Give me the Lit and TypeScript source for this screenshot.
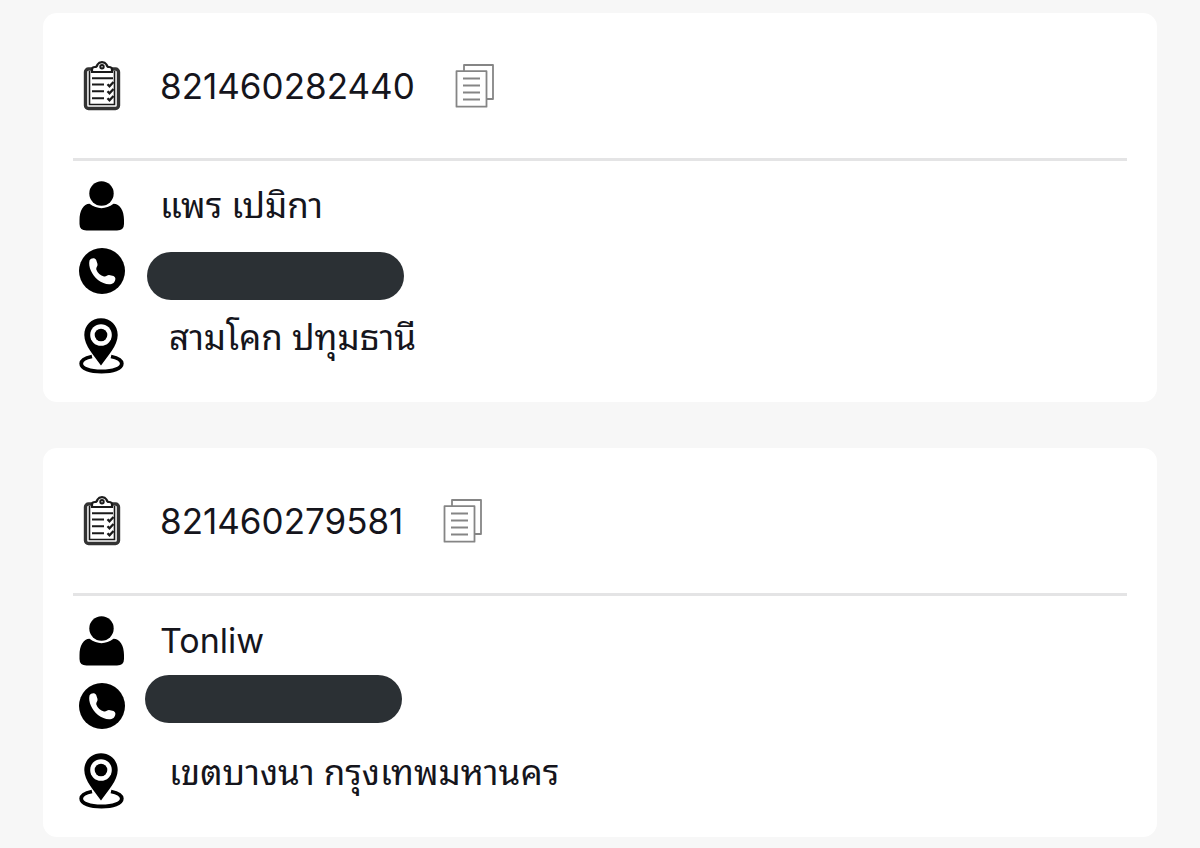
import { LitElement, html, css, svg } from "lit";
import { customElement, property } from "lit/decorators.js";
import { classMap } from "lit/directives/class-map.js";

interface Parcel {
  tracking: string;
  name: string;
  nameLang: string;
  address: string;
  raised: boolean;
}

const parcels: Parcel[] = [
  { tracking: "821460282440", name: "แพร เปมิกา", nameLang: "th", address: "สามโคก ปทุมธานี", raised: false },
  { tracking: "821460279581", name: "Tonliw", nameLang: "en", address: "เขตบางนา กรุงเทพมหานคร", raised: true },
];

const clipboardIcon = svg`
  <svg width="38" height="50" viewBox="0 0 38 50" fill="none" stroke="#1a1a1a" aria-hidden="true">
    <rect x="2.500" y="8" width="33" height="39.500" rx="3" stroke="#333" stroke-width="3.400"/>
    <path d="M6.500 10V43.500H31.500V10" stroke-width="1.600"/>
    <path d="M9 11V8.500Q9 6 12 6Q14 6 14.500 3.500Q16 1.200 19 1.200Q22 1.200 23.500 3.500Q24 6 26 6Q29 6 29 8.500V11Z" fill="#fff" stroke-width="2.200"/>
    <circle cx="19" cy="5.800" r="1.700" stroke-width="2"/>
    <path d="M9 17.200H30M9 23.500H21M9 30.200H21M9 37.200H21" stroke-width="2"/>
    <path d="M24.500 23.200L26.500 25.300L30.500 21M24.500 30.200L26.500 32.300L30.500 28M24.500 37.200L26.500 39.300L30.500 35" stroke-width="2.300"/>
  </svg>`;

const copyIcon = svg`
  <svg width="40" height="44" viewBox="0 0 40 44" fill="none" stroke="#858585" stroke-width="1.800" stroke-linejoin="round" aria-hidden="true">
    <path d="M9 7V1H38V35H32"/>
    <rect x="1.500" y="7.200" width="30" height="35.500"/>
    <path d="M8 14.500H25M8 21.500H25M8 28.500H25M8 35.500H25" stroke-width="2"/>
  </svg>`;

const personIcon = svg`
  <svg width="46" height="50" viewBox="0 0 46 50" aria-hidden="true">
    <circle cx="22.500" cy="12.500" r="12.200"/>
    <path d="M10.500 22.800Q22.500 31.500 34.500 22.800C41 22.800 45 30 45 39V43Q45 49.500 38 49.500H7.500Q0.500 49.500 0.500 43V39C0.500 30 4.500 22.800 10.500 22.800Z"/>
  </svg>`;

const phoneIcon = svg`
  <svg width="46" height="46" viewBox="0 0 46 46" aria-hidden="true">
    <circle cx="23" cy="23" r="23"/>
    <path fill="#fff" d="M10.500 12.500C12 9.600 16 9.300 17.200 12L18.500 16C19 18.200 16.800 19.500 17.300 21.500C18.500 25 21.500 27.500 25 28.500C27.200 29 28 27 30 27L34.500 28C37.500 29.500 36.500 33 34.500 35C31 37.500 24 36 19 32C13 27 9 19 10.500 12.500Z"/>
  </svg>`;

const pinIcon = svg`
  <svg width="46" height="56" viewBox="0 0 46 56" aria-hidden="true">
    <path d="M13 38.500C6 40 2.200 42.500 2.200 45.500C2.200 50.500 11 53.500 22.500 53.500C34 53.500 42.800 50.500 42.800 45.500C42.800 42.500 39 40 32 38.500" fill="none" stroke="#000" stroke-width="3.800"/>
    <path d="M22 0.300C12.500 0.300 5.300 7.500 5.300 17C5.300 28 15.500 38 22 47.500C28.500 38 38.700 28 38.700 17C38.700 7.500 31.500 0.300 22 0.300Z"/>
    <circle cx="22" cy="17" r="10.800" fill="#fff"/>
    <circle cx="22" cy="17" r="6.300"/>
  </svg>`;

@customElement("parcel-card")
export class ParcelCard extends LitElement {
  @property({ attribute: false }) parcel!: Parcel;

  static styles = css`
    :host {
      display: block;
      padding: 0 30px 28px;
      border-radius: 14px;
      background: #fff;
    }
    svg {
      display: block;
    }
    .header,
    .row {
      display: flex;
    }
    .header {
      align-items: center;
      height: 145px;
      border-bottom: 3px solid #e4e4e5;
    }
    .icon {
      display: flex;
      flex: none;
      justify-content: center;
      width: 58px;
      margin-right: 29px;
    }
    .tracking {
      font-size: 35px;
      line-height: 44px;
      margin-right: 40px;
    }
    .copy {
      padding: 0;
      border: 0;
      background: none;
      cursor: pointer;
    }
    .details {
      display: flex;
      flex-direction: column;
      gap: 16px;
      padding-top: 20px;
    }
    .row {
      align-items: center;
    }
    .text {
      font-size: 34px;
      line-height: 40px;
    }
    .text:lang(th) {
      padding-bottom: 8px;
      font-family: "Noto Sans Thai Looped", Loma, Garuda, Waree, "Noto Sans Thai", sans-serif;
      font-size: 35px;
      line-height: 32px;
    }
    .phone {
      position: relative;
      height: 48px;
    }
    .mask {
      position: absolute;
      top: 5px;
      left: 74px;
      width: 257px;
      height: 48px;
      border-radius: 24px;
      background: #2b3034;
    }
    .mask.raised {
      top: -7px;
      left: 72px;
    }
    .address {
      align-items: flex-start;
      padding-top: 7px;
    }
    .address .text {
      padding-left: 9px;
    }
  `;

  render() {
    const { tracking, name, nameLang, address, raised } = this.parcel;
    return html`
      <div class="header">
        <span class="icon">${clipboardIcon}</span>
        <span class="tracking">${tracking}</span>
        <button class="copy" type="button" aria-label="Copy">${copyIcon}</button>
      </div>
      <div class="details">
        <div class="row">
          <span class="icon">${personIcon}</span>
          <span class="text" lang=${nameLang}>${name}</span>
        </div>
        <div class="row phone">
          <span class="icon">${phoneIcon}</span>
          <span class=${classMap({ mask: true, raised })}></span>
        </div>
        <div class="row address">
          <span class="icon">${pinIcon}</span>
          <span class="text" lang="th">${address}</span>
        </div>
      </div>
    `;
  }
}

@customElement("app-root")
export class AppRoot extends LitElement {
  static styles = css`
    :host {
      display: block;
      box-sizing: border-box;
      min-height: 100vh;
      padding: 13px 43px 11px;
      background: #f7f7f7;
      color: #15151c;
      font-family: Inter, "Noto Sans", sans-serif;
    }
    .list {
      display: flex;
      flex-direction: column;
      gap: 46px;
    }
  `;

  render() {
    return html`<main class="list">
      ${parcels.map((p) => html`<parcel-card .parcel=${p}></parcel-card>`)}
    </main>`;
  }
}
